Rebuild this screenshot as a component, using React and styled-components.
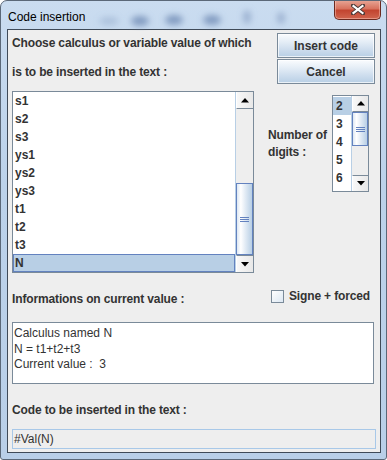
import React from 'react';
import styled, { createGlobalStyle } from 'styled-components';

const GlobalStyle = createGlobalStyle`
  html, body {
    margin: 0;
    padding: 0;
    background: #ffffff;
  }
  body {
    font-family: "Liberation Sans", Arial, sans-serif;
  }
`;

const Frame = styled.div`
  position: relative;
  width: 387px;
  height: 460px;
  box-sizing: border-box;
  display: flex;
  flex-direction: column;
  padding: 0 5px 6px 6px;
  border: 1px solid #5b6878;
  border-radius: 7px 7px 3px 3px;
  background: linear-gradient(to bottom, #cadcf0 0%, #bcd2ea 40%, #b9cfe8 100%);
  overflow: hidden;
`;

const TitleBar = styled.div`
  position: relative;
  height: 28px;
  display: flex;
  align-items: flex-start;
`;

const Blur = styled.svg`
  position: absolute;
  left: 60px;
  top: -4px;
  pointer-events: none;
`;

const Title = styled.span`
  position: relative;
  margin: 9px 0 0 1px;
  font-family: "Liberation Sans", Arial, sans-serif;
  font-size: 12px;
  line-height: 14px;
  color: #000000;
`;

const CloseButton = styled.div`
  position: relative;
  margin: -1px 0 0 auto;
  width: 47px;
  height: 20px;
  box-sizing: border-box;
  border: 1px solid #6b2a20;
  border-top: none;
  border-radius: 0 0 5px 5px;
  background: linear-gradient(to bottom, #e8a898 0%, #d8735f 45%, #c24530 55%, #d0654e 100%);
  box-shadow: inset 0 0 0 1px rgba(255, 210, 200, 0.45);
  display: flex;
  align-items: center;
  justify-content: center;
`;

const Client = styled.div`
  flex: 1;
  box-sizing: border-box;
  border: 1px solid #3f4a58;
  background: #eeeeee;
  display: flex;
  flex-direction: column;
  color: #333333;
`;

const TopRow = styled.div`
  display: flex;
  justify-content: space-between;
  padding: 3px 5px 0 4px;
`;

const Label = styled.div`
  font-size: 12px;
  font-weight: bold;
  letter-spacing: -0.14px;
  line-height: ${p => p.$lh || 14}px;
  color: #333333;
  margin-top: ${p => p.$mt || 0}px;
  padding-left: ${p => p.$pl || 0}px;
  white-space: nowrap;
`;

const LabelStack = styled.div`
  display: flex;
  flex-direction: column;
  gap: 15px;
  padding-top: 3px;
`;

const ButtonStack = styled.div`
  display: flex;
  flex-direction: column;
  gap: 1px;
`;

const Button = styled.div`
  width: 98px;
  height: 25px;
  box-sizing: border-box;
  border: 1px solid #7a8a99;
  background: linear-gradient(to bottom, #fafcfe 0%, #e4edf6 35%, #cfdeee 65%, #b8cfe5 100%);
  box-shadow: inset 0 0 0 1px rgba(255, 255, 255, 0.7);
  display: flex;
  align-items: center;
  justify-content: center;
  font-size: 12px;
  font-weight: bold;
  color: #333333;
`;

const MiddleRow = styled.div`
  display: flex;
  align-items: flex-start;
  margin-top: 7px;
  padding-left: 4px;
`;

const ScrollBox = styled.div`
  width: ${p => p.$w}px;
  height: ${p => p.$h}px;
  box-sizing: border-box;
  border: 1px solid #7a8a99;
  background: #ffffff;
  display: flex;
  margin-top: ${p => p.$mt || 0}px;
`;

const Items = styled.div`
  flex: 1;
  display: flex;
  flex-direction: column;
  padding-top: ${p => p.$pt || 0}px;
`;

const Item = styled.div`
  height: 18px;
  box-sizing: border-box;
  padding-left: ${p => p.$pl || 1}px;
  font-size: 12px;
  font-weight: bold;
  line-height: 17px;
  color: #333333;
  background: ${p => (p.$selected ? '#b8cfe5' : 'transparent')};
  border: 1px solid ${p => (p.$focused ? '#6382bf' : 'transparent')};
`;

const ScrollBar = styled.div`
  width: ${p => p.$w}px;
  display: flex;
  flex-direction: column;
  background: #eeeeee;
  border-left: 1px solid #b8cfe5;
`;

const ArrowButton = styled.div`
  height: ${p => p.$h}px;
  box-sizing: border-box;
  background: linear-gradient(to right, #f8f8f8, #e8e8e8);
  border-top: ${p => (p.$down ? '1px solid #7a8a99' : 'none')};
  border-bottom: ${p => (p.$down ? 'none' : '1px solid #7a8a99')};
  border-left: 1px solid #ffffff;
  display: flex;
  align-items: center;
  justify-content: center;
`;

const Track = styled.div`
  flex: 1;
  display: flex;
  flex-direction: column;
  padding-top: ${p => p.$before}px;
  padding-bottom: ${p => p.$after}px;
`;

const Thumb = styled.div`
  height: ${p => p.$h}px;
  box-sizing: border-box;
  border: 1px solid #6382bf;
  background: linear-gradient(to right, #dde8f3 0%, #ffffff 25%, #dde8f3 60%, #b8cfe5 100%);
  display: flex;
  flex-direction: column;
  align-items: center;
  justify-content: center;
  gap: 1px;
`;

const Grip = styled.div`
  width: 9px;
  height: 1px;
  background: #6382bf;
`;

const DigitsArea = styled.div`
  display: flex;
  align-items: center;
  margin-left: 14px;
  margin-top: 4px;
`;

const DigitsLabel = styled.div`
  width: 64px;
`;

const InfoRow = styled.div`
  display: flex;
  align-items: flex-start;
  margin-top: 14px;
  height: 20px;
  padding: 0 10px 0 4px;
`;

const CheckGroup = styled.div`
  margin-left: auto;
  display: flex;
  align-items: center;
  gap: 5px;
  margin-top: 2px;
`;

const CheckBox = styled.div`
  width: 13px;
  height: 13px;
  box-sizing: border-box;
  border: 1px solid #7a8a99;
  background: linear-gradient(to bottom right, #ffffff, #dde8f3);
`;

const TextArea = styled.div`
  margin: 15px 0 0 4px;
  width: 362px;
  height: 62px;
  box-sizing: border-box;
  border: 1px solid #7a8a99;
  background: #ffffff;
  padding: 3px 0 0 1px;
  font-size: 12px;
  line-height: 15.5px;
  color: #333333;
  white-space: pre;
`;

const Field = styled.div`
  margin: 12px 0 0 4px;
  width: 364px;
  height: 20px;
  box-sizing: border-box;
  border: 1px solid #a8c8e8;
  background: #eeeeee;
  padding-left: 1px;
  font-size: 12px;
  line-height: 18px;
  color: #333333;
`;

const Arrow = ({ down }) => (
  <svg width="8" height="5" viewBox="0 0 8 5">
    <path d={down ? 'M0 0 H8 L4 4.5 Z' : 'M0 4.5 H8 L4 0 Z'} fill="#000" />
  </svg>
);

const VScroll = ({ w, btn, before, thumb, after }) => (
  <ScrollBar $w={w}>
    <ArrowButton $h={btn}><Arrow /></ArrowButton>
    <Track $before={before} $after={after}>
      <Thumb $h={thumb}>
        <Grip />
        <Grip />
        <Grip />
      </Thumb>
    </Track>
    <ArrowButton $h={btn} $down><Arrow down /></ArrowButton>
  </ScrollBar>
);

const names = ['s1', 's2', 's3', 'ys1', 'ys2', 'ys3', 't1', 't2', 't3', 'N'];
const digits = ['2', '3', '4', '5', '6'];

export default function App() {
  return (
    <>
      <GlobalStyle />
      <Frame>
        <TitleBar>
          <Blur width="260" height="34" viewBox="0 0 260 34">
            <defs>
              <filter id="b" x="-50%" y="-50%" width="200%" height="200%">
                <feGaussianBlur stdDeviation="3" />
              </filter>
            </defs>
            <g filter="url(#b)" fill="#7690b8">
              <ellipse cx="42" cy="24" rx="10" ry="4" opacity="0.35" />
              <ellipse cx="73" cy="24" rx="9" ry="5" opacity="0.85" />
              <ellipse cx="107" cy="23" rx="9" ry="5" opacity="0.85" />
              <ellipse cx="145" cy="23" rx="9" ry="5" opacity="0.85" />
              <ellipse cx="180" cy="20" rx="4" ry="7" opacity="0.55" />
              <ellipse cx="214" cy="21" rx="4" ry="6" opacity="0.55" />
            </g>
          </Blur>
          <Title>Code insertion</Title>
          <CloseButton>
            <svg width="14" height="11" viewBox="0 0 14 11">
              <path d="M2 1.5 L12 9.5 M12 1.5 L2 9.5" stroke="#4a3a38" strokeWidth="4" strokeLinecap="square" />
              <path d="M2.5 2 L11.5 9 M11.5 2 L2.5 9" stroke="#ffffff" strokeWidth="2.2" strokeLinecap="square" />
            </svg>
          </CloseButton>
        </TitleBar>
        <Client>
          <TopRow>
            <LabelStack>
              <Label>Choose calculus or variable value of which</Label>
              <Label>is to be inserted in the text :</Label>
            </LabelStack>
            <ButtonStack>
              <Button>Insert code</Button>
              <Button>Cancel</Button>
            </ButtonStack>
          </TopRow>
          <MiddleRow>
            <ScrollBox $w={242} $h={182}>
              <Items>
                {names.map(n => (
                  <Item key={n} $selected={n === 'N'} $focused={n === 'N'}>{n}</Item>
                ))}
              </Items>
              <VScroll w={17} btn={17} before={74} thumb={72} after={0} />
            </ScrollBox>
            <DigitsArea>
              <DigitsLabel>
                <Label $lh={17}>Number of</Label>
                <Label $lh={17}>digits :</Label>
              </DigitsLabel>
              <ScrollBox $w={37} $h={97}>
                <Items $pt={1}>
                  {digits.map(d => (
                    <Item key={d} $pl={2} $selected={d === '2'}>{d}</Item>
                  ))}
                </Items>
                <VScroll w={16} btn={16} before={0} thumb={34} after={29} />
              </ScrollBox>
            </DigitsArea>
          </MiddleRow>
          <InfoRow>
            <Label $mt={5}>Informations on current value :</Label>
            <CheckGroup>
              <CheckBox />
              <Label>Signe + forced</Label>
            </CheckGroup>
          </InfoRow>
          <TextArea>{'Calculus named N\nN = t1+t2+t3\nCurrent value :  3'}</TextArea>
          <Label $mt={19} $pl={4}>Code to be inserted in the text :</Label>
          <Field>#Val(N)</Field>
        </Client>
      </Frame>
    </>
  );
}
